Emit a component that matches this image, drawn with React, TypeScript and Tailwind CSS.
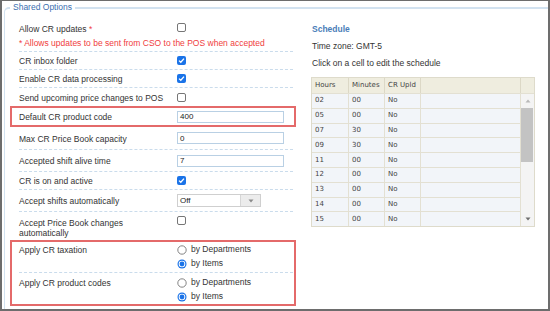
import React from 'react'

// small form controls drawn by hand so they match the old browser look
function Box({ checked }: { checked?: boolean }) {
  if (checked) {
    return (
      <span className="flex h-[9px] w-[9px] items-center justify-center rounded-[2px] bg-[#1a73e8]">
        <svg width="7" height="7" viewBox="0 0 7 7">
          <path d="M1 3.6 L2.8 5.3 L6 1.6" fill="none" stroke="#fff" strokeWidth="1.3" />
        </svg>
      </span>
    )
  }
  return <span className="block h-[9px] w-[9px] rounded-[2px] border border-[#767676] bg-white" />
}

function Radio({ checked }: { checked?: boolean }) {
  return (
    <svg width="10" height="10" viewBox="0 0 10 10">
      {checked ? (
        <>
          <circle cx="5" cy="5" r="4.5" fill="#1a73e8" />
          <circle cx="5" cy="5" r="3.3" fill="#fff" />
          <circle cx="5" cy="5" r="2.4" fill="#1a73e8" />
        </>
      ) : (
        <circle cx="5" cy="5" r="4.2" fill="#fff" stroke="#767676" strokeWidth="0.9" />
      )}
    </svg>
  )
}

function TextBox({ value }: { value: string }) {
  return (
    <div className="flex h-[12px] w-[107px] items-center border border-[#b9d0e4] bg-white pl-[2px] text-[8px] text-[#222]">
      {value}
    </div>
  )
}

function Row({ label, children, h = 'h-[18px]', last }: { label: React.ReactNode; children: React.ReactNode; h?: string; last?: boolean }) {
  return (
    <div className={`flex w-[274px] items-center ${h} ${last ? '' : 'border-b border-dashed border-[#cadcec]'}`}>
      <div className="w-[158px] pt-[2px]">{label}</div>
      <div>{children}</div>
    </div>
  )
}

function RadioPair() {
  return (
    <div className="flex flex-col gap-[3px]">
      <div className="flex items-center gap-[4px]">
        <Radio /> <span>by Departments</span>
      </div>
      <div className="flex items-center gap-[4px]">
        <Radio checked /> <span>by Items</span>
      </div>
    </div>
  )
}

const schedule = [
  ['02', '00', 'No'],
  ['05', '00', 'No'],
  ['07', '30', 'No'],
  ['09', '30', 'No'],
  ['11', '00', 'No'],
  ['12', '00', 'No'],
  ['13', '00', 'No'],
  ['14', '00', 'No'],
  ['15', '00', 'No'],
]

export default function App() {
  return (
    <div className="h-[311px] w-[550px] overflow-hidden border-b-2 border-l-2 border-r-2 border-t border-[#6d6d6d] bg-white font-['Liberation_Sans',Arial,sans-serif] text-[8.5px] leading-[11px] text-[#333]">
      <fieldset className="ml-[2px] h-[330px] w-[560px] rounded-tl-[5px] border-l border-t-2 border-[#d2e2f0] pl-[5px]">
        <legend className="px-[3px] text-[8.5px] leading-[13px] text-[#3a6fb0]">Shared Options</legend>

        <div className="flex">
          {/* left column: options */}
          <div className="w-[286px]">
            <div className="ml-[9px] w-[274px] border-b border-dashed border-[#cadcec] pb-[2px] pt-[9px]">
              <div className="flex h-[12px] items-start">
                <div className="w-[158px] pt-[1px]">
                  Allow CR updates <span className="text-[#f04040]">*</span>
                </div>
                <Box />
              </div>
              <div className="mt-[2px] h-[12px] whitespace-nowrap leading-[12px] text-[#f04040]">
                * Allows updates to be sent from CSO to the POS when accepted
              </div>
            </div>

            <div className="ml-[9px]">
              <Row label="CR inbox folder">
                <Box checked />
              </Row>
              <Row label="Enable CR data processing">
                <Box checked />
              </Row>
              <Row label="Send upcoming price changes to POS" last>
                <Box />
              </Row>
            </div>

            <div className="h-[21px] w-[286px] border-2 border-[#e46a6a] pl-[7px]">
              <Row label="Default CR product code" h="h-[17px]" last>
                <TextBox value="400" />
              </Row>
            </div>

            <div className="ml-[9px]">
              <Row label="Max CR Price Book capacity" h="h-[23px]">
                <TextBox value="0" />
              </Row>
              <Row label="Accepted shift alive time" h="h-[22px]">
                <TextBox value="7" />
              </Row>
              <Row label="CR is on and active" h="h-[18px]">
                <Box checked />
              </Row>
              <Row label="Accept shifts automatically" h="h-[22px]">
                <div className="flex h-[13px] w-[84px] border border-[#cfcfcf] bg-white">
                  <div className="flex flex-1 items-center pl-[2px] text-[8px] text-[#222]">Off</div>
                  <div className="flex w-[20px] items-center justify-center border-l border-[#d6d6d6] bg-[#ececec]">
                    <svg width="6" height="4" viewBox="0 0 6 4">
                      <path d="M0.5 0.5 L5.5 0.5 L3 3.5 Z" fill="#8a8a8a" />
                    </svg>
                  </div>
                </div>
              </Row>
              <div className="flex h-[28px] w-[274px]">
                <div className="w-[158px] pt-[6px] leading-[10px]">
                  Accept Price Book changes
                  <br />
                  automatically
                </div>
                <div className="pt-[4px]">
                  <Box />
                </div>
              </div>
            </div>

            <div className="h-[66px] w-[286px] border-2 border-[#e46a6a] pl-[7px]">
              <div className="flex h-[31px] w-[274px] border-b border-dashed border-[#cadcec] pt-[2px]">
                <div className="w-[158px] pt-[1px]">Apply CR taxation</div>
                <RadioPair />
              </div>
              <div className="flex h-[31px] w-[274px] pt-[4px]">
                <div className="w-[158px] pt-[1px]">Apply CR product codes</div>
                <RadioPair />
              </div>
            </div>
          </div>

          {/* right column: schedule */}
          <div className="ml-[15px] pt-[9px]">
            <div className="h-[12px] pl-[1px] font-bold leading-[12px] text-[#4a7db8]">Schedule</div>
            <div className="mt-[5px] h-[12px] pl-[1px] leading-[12px]">Time zone: GMT-5</div>
            <div className="mt-[5px] h-[12px] pl-[1px] leading-[12px]">Click on a cell to edit the schedule</div>

            <div className="mt-[8px] w-[224px] border border-[#dedbcb] font-['DejaVu_Sans',Verdana,sans-serif] text-[7px] text-[#444]">
              <div className="flex h-[15px] bg-[#efeddf]">
                <div className="flex w-[37px] items-center border-r border-[#dcd8c6] pl-[3px]">Hours</div>
                <div className="flex w-[36px] items-center border-r border-[#dcd8c6] pl-[3px]">Minutes</div>
                <div className="flex w-[36px] items-center border-r border-[#dcd8c6] pl-[3px]">CR Upld</div>
                <div className="w-[100px] border-r border-[#dcd8c6]" />
                <div className="flex-1" />
              </div>
              <div className="flex">
                <div className="w-[209px]">
                  {schedule.map(([h, m, c]) => (
                    <div key={h} className="flex h-[14.8px] border-t border-[#e3e0d2] bg-[#f2f5f9]">
                      <div className="flex w-[37px] items-center border-r border-[#e3e0d2] pl-[3px]">{h}</div>
                      <div className="flex w-[36px] items-center border-r border-[#e3e0d2] pl-[3px]">{m}</div>
                      <div className="flex w-[36px] items-center border-r border-[#e3e0d2] pl-[3px]">{c}</div>
                      <div className="w-[100px] border-r border-[#e3e0d2]" />
                    </div>
                  ))}
                </div>
                <div className="flex w-[13px] flex-col border-t border-[#e3e0d2] bg-[#f4f4f4]">
                  <div className="flex h-[14px] items-center justify-center">
                    <svg width="6" height="4" viewBox="0 0 6 4">
                      <path d="M0.5 3.5 L5.5 3.5 L3 0.5 Z" fill="#b8b8b8" />
                    </svg>
                  </div>
                  <div className="mr-[1px] h-[54px] bg-[#c3c3c3]" />
                  <div className="flex-1" />
                  <div className="flex h-[14px] items-center justify-center">
                    <svg width="6" height="4" viewBox="0 0 6 4">
                      <path d="M0.5 0.5 L5.5 0.5 L3 3.5 Z" fill="#6e6e6e" />
                    </svg>
                  </div>
                </div>
              </div>
            </div>
          </div>
        </div>
      </fieldset>
    </div>
  )
}
